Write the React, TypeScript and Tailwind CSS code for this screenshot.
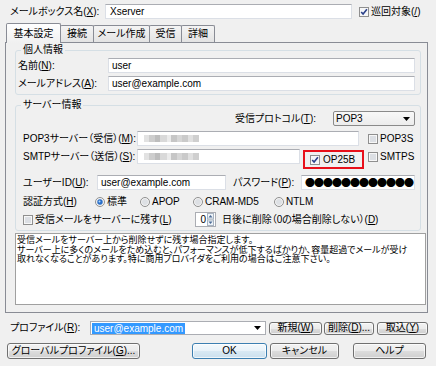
import type { ReactNode } from 'react';

function U({ children }: { children: ReactNode }) {
  return <span className="underline decoration-1 underline-offset-1">{children}</span>;
}

function Check({ checked = false }: { checked?: boolean }) {
  return (
    <svg width="10" height="10" viewBox="0 0 10 10" className="shrink-0">
      <rect x="0.5" y="0.5" width="9" height="9" fill="#f7f7f7" stroke="#8f8f8f" />
      <rect x="2" y="2" width="6" height="6" fill={checked ? '#f4f6f9' : '#dcdfe4'} />
      {checked && <path d="M2.2 4.9 L4.1 7.1 L7.9 2.3" fill="none" stroke="#2c418a" strokeWidth="1.6" />}
    </svg>
  );
}

function Radio({ on = false }: { on?: boolean }) {
  return (
    <svg width="10" height="10" viewBox="0 0 10 10" className="shrink-0">
      <circle cx="5" cy="5" r="4.5" fill="#f4f4f4" stroke="#8f8f8f" />
      <circle cx="5" cy="5" r="3" fill="#dde0e4" />
      {on && (
        <>
          <circle cx="5" cy="5" r="2.7" fill="#2a6fc9" />
          <circle cx="4.5" cy="4.4" r="1" fill="#b4dafc" />
        </>
      )}
    </svg>
  );
}

function Arrow() {
  return (
    <svg width="7" height="4" viewBox="0 0 7 4" className="shrink-0">
      <path d="M0 0H7L3.5 4Z" fill="#000" />
    </svg>
  );
}

function Spin() {
  return (
    <svg width="7" height="13" viewBox="0 0 7 13" className="shrink-0">
      <rect x="0.5" y="0.5" width="6" height="5.5" fill="#eef3f8" stroke="#a8b3c0" />
      <rect x="0.5" y="7" width="6" height="5.5" fill="#eef3f8" stroke="#a8b3c0" />
      <path d="M3.5 2 L5.5 4.5 L1.5 4.5Z" fill="#4a6a94" />
      <path d="M1.5 8.5 L5.5 8.5 L3.5 11Z" fill="#4a6a94" />
    </svg>
  );
}

function Field({ className = '', children }: { className?: string; children?: ReactNode }) {
  return (
    <div
      className={`flex h-[15px] shrink-0 items-center overflow-hidden border border-[#dbdfe6] border-t-[#abadb3] bg-white pl-[3px] ${className}`}
    >
      {children}
    </div>
  );
}

function Btn({ className = '', def = false, children }: { className?: string; def?: boolean; children: ReactNode }) {
  return (
    <div
      className={`flex shrink-0 items-center justify-center whitespace-nowrap rounded-[3px] border shadow-[inset_0_0_0_1px_rgba(255,255,255,0.7)] ${
        def
          ? 'border-[#3c7fb1] bg-[linear-gradient(#f4f9fc,#e8f2f9_50%,#d9e9f4_50%,#cbe0ee)]'
          : 'border-[#707070] bg-[linear-gradient(#f2f2f2,#ebebeb_50%,#dddddd_50%,#cfcfcf)]'
      } ${className}`}
    >
      {children}
    </div>
  );
}

// blurred host name
const mosaic: [string, number][] = [
  ['#e2e2e2', 5],
  ['#cdcdcd', 6],
  ['#bdbdbd', 5],
  ['#d9d9d9', 7],
  ['#ebebeb', 4],
  ['#c6c6c6', 6],
  ['#d6d6d6', 5],
  ['#cacaca', 6],
  ['#e0e0e0', 5],
  ['#cfcfcf', 6],
];

function Mosaic() {
  return (
    <div className="ml-[3px] flex h-[7px] blur-[0.6px]">
      {mosaic.map(([c, w], i) => (
        <span key={i} style={{ background: c, width: w }} className="h-full" />
      ))}
    </div>
  );
}

const tabs: [string, string][] = [
  ['接続', 'w-[34px]'],
  ['メール作成', 'w-[57px]'],
  ['受信', 'w-[33px]'],
  ['詳細', 'w-[34px]'],
];

export default function App() {
  return (
    <div className="h-[366px] w-[436px] overflow-hidden bg-[#f0f0f0] pt-[4px] font-['Liberation_Sans','Noto_Sans_CJK_JP',sans-serif] text-[10px] leading-[12px] whitespace-nowrap text-black [font-feature-settings:'palt']">
      <div className="flex h-[15px] items-center pl-[10px]">
        <span className="w-[95px]">
          メールボックス名(<U>X</U>):
        </span>
        <Field className="w-[247px] pl-[4px]">Xserver</Field>
        <span className="ml-[7px] flex items-center">
          <Check checked />
          <span className="ml-[2px]">
            巡回対象(<U>/</U>)
          </span>
        </span>
      </div>

      {/* tabs */}
      <div className="relative z-10 mt-[4px] flex h-[19px] items-end pl-[6px]">
        <div className="relative z-10 -mb-px flex h-[20px] w-[55px] items-center justify-center rounded-t-[2px] border border-b-0 border-[#898c95] bg-[linear-gradient(#ffffff,#f0f0f0)]">
          基本設定
        </div>
        {tabs.map(([t, w]) => (
          <div
            key={t}
            className={`-ml-px flex h-[17px] ${w} items-center justify-center rounded-t-[2px] border border-b-0 border-[#898c95] bg-[linear-gradient(#f4f4f4,#e3e3e3)]`}
          >
            {t}
          </div>
        ))}
      </div>

      <div className="ml-[5px] h-[271px] w-[423px] border border-[#898c95] bg-[#f0f0f0] pl-[9px] pt-px">
        <fieldset className="w-[406px] rounded-[3px] border border-[#d5dfe5] px-[2px] pb-[3px]">
          <legend className="ml-[3px] px-[2px] leading-[12px]">個人情報</legend>
          <div className="mt-[2px] flex h-[15px] items-center">
            <span className="w-[90px]">
              名前(<U>N</U>):
            </span>
            <Field className="w-[307px]">user</Field>
          </div>
          <div className="mt-[3px] flex h-[15px] items-center">
            <span className="w-[90px]">
              メールアドレス(<U>A</U>):
            </span>
            <Field className="w-[307px]">user@example.com</Field>
          </div>
        </fieldset>

        <fieldset className="mt-[4px] w-[406px] rounded-[3px] border border-[#d5dfe5] px-[2px] pb-[3px]">
          <legend className="ml-[3px] px-[2px] leading-[12px]">サーバー情報</legend>

          <div className="flex h-[15px] items-center justify-end pr-[3px]">
            <span className="mr-[17px]">
              受信プロトコル(<U>T</U>):
            </span>
            <div className="flex h-[15px] w-[82px] items-center rounded-[2px] border border-[#8a8a8a] bg-[linear-gradient(#f8f8f8,#ececec)] pl-[2px] pr-[4px]">
              <span>POP3</span>
              <span className="ml-auto flex">
                <Arrow />
              </span>
            </div>
          </div>

          <div className="mt-[5px] flex h-[15px] items-center pl-[5px]">
            <span className="w-[114px]">
              POP3サーバー（受信）(<U>M</U>):
            </span>
            <Field className="w-[222px]">
              <Mosaic />
            </Field>
            <span className="ml-[9px] flex items-center">
              <Check />
              <span className="ml-[2px]">POP3S</span>
            </span>
          </div>

          <div className="mt-[3px] flex h-[15px] items-center pl-[5px]">
            <span className="w-[114px]">
              SMTPサーバー（送信）(<U>S</U>):
            </span>
            <Field className="w-[163px]">
              <Mosaic />
            </Field>
            <div className="ml-[3px] mt-[1px] flex h-[19px] w-[61px] items-center self-start border-2 border-[#e8101a] pl-[5px]">
              <Check checked />
              <span className="ml-[3px]">OP25B</span>
            </div>
            <span className="ml-[4px] flex items-center">
              <Check />
              <span className="ml-[2px]">SMTPS</span>
            </span>
          </div>

          <div className="mt-[11px] flex h-[15px] items-center pl-[5px]">
            <span className="w-[74px]">
              ユーザーID(<U>U</U>):
            </span>
            <Field className="w-[129px]">user@example.com</Field>
            <span className="ml-[7px] w-[68px]">
              パスワード(<U>P</U>):
            </span>
            <Field className="w-[114px] pl-[2px] text-[10px] font-['Noto_Sans_CJK_JP',sans-serif] tracking-[-1px]">
              ●●●●●●●●●●●●
            </Field>
          </div>

          <div className="mt-[6px] flex h-[11px] items-center pl-[5px]">
            <span className="w-[72px]">
              認証方式(<U>H</U>)
            </span>
            <span className="flex w-[45px] items-center">
              <Radio on />
              <span className="ml-[2px]">標準</span>
            </span>
            <span className="flex w-[53px] items-center">
              <Radio />
              <span className="ml-[2px]">APOP</span>
            </span>
            <span className="flex w-[81px] items-center">
              <Radio />
              <span className="ml-[2px]">CRAM-MD5</span>
            </span>
            <span className="flex items-center">
              <Radio />
              <span className="ml-[2px]">NTLM</span>
            </span>
          </div>

          <div className="mt-[5px] flex h-[15px] items-center pl-[5px]">
            <span className="flex w-[172px] items-center">
              <Check />
              <span className="ml-[2px]">
                受信メールをサーバーに残す(<U>L</U>)
              </span>
            </span>
            <div className="flex h-[15px] w-[21px] items-center justify-end border border-[#abadb3] bg-white pr-px">
              <span className="mr-px">0</span>
              <Spin />
            </div>
            <span className="ml-[6px]">
              日後に削除（0の場合削除しない）(<U>D</U>)
            </span>
          </div>
        </fieldset>

        <div className="mt-[2px] h-[72px] w-[411px] overflow-hidden border border-[#a0a0a0] bg-white pl-px pt-[2px] text-[9px] leading-[9.5px]">
          <p>受信メールをサーバー上から削除せずに残す場合指定します。</p>
          <p>サーバー上に多くのメールをため込むと、パフォーマンスが低下するばかりか、容量超過でメールが受け</p>
          <p>取れなくなることがあります。特に商用プロバイダをご利用の場合はご注意下さい。</p>
        </div>
      </div>

      <div className="mt-[8px] flex h-[14px] items-center pl-[10px]">
        <span className="w-[80px]">
          プロファイル(<U>R</U>):
        </span>
        <div className="flex h-[14px] w-[176px] items-center border border-[#abadb3] bg-white pl-px pr-[4px]">
          <span className="bg-[#3399ff] px-[2px] leading-[11px] text-white">user@example.com</span>
          <span className="ml-auto flex">
            <Arrow />
          </span>
        </div>
        <Btn className="ml-[3px] h-[13px] w-[53px]">
          新規(<U>W</U>)
        </Btn>
        <Btn className="ml-[2px] h-[13px] w-[50px]">
          削除(<U>D</U>)...
        </Btn>
        <Btn className="ml-[3px] h-[13px] w-[51px]">
          取込(<U>Y</U>)
        </Btn>
      </div>

      <div className="mt-[8px] flex h-[16px] items-center pl-[7px]">
        <Btn className="h-[16px] w-[133px]">
          グローバルプロファイル(<U>G</U>)...
        </Btn>
        <Btn def className="ml-[52px] h-[16px] w-[75px]">
          OK
        </Btn>
        <Btn className="ml-[3px] h-[16px] w-[69px]">キャンセル</Btn>
        <Btn className="ml-[14px] h-[16px] w-[73px]">ヘルプ</Btn>
      </div>
    </div>
  );
}
